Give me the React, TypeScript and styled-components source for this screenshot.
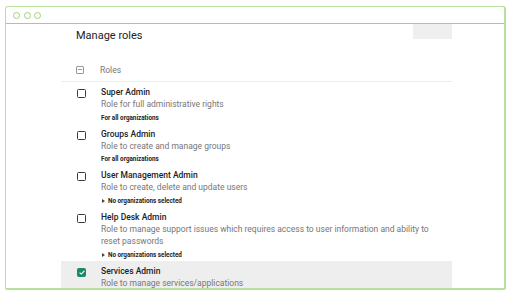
import React from "react";
import styled, { createGlobalStyle } from "styled-components";

const Global = createGlobalStyle`
  html, body { margin: 0; padding: 0; background: #ffffff; }
  body { font-family: Roboto, "Liberation Sans", sans-serif; }
  * { box-sizing: border-box; }
`;

const Frame = styled.div`
  margin: 6px 0 0 5px;
  width: 501px;
  height: 284px;
  border-style: solid;
  border-color: #b9df9d;
  border-width: 1.5px 2.5px 2.5px 1.5px;
  border-radius: 3px 3px 2px 2px;
  overflow: hidden;
  display: flex;
  flex-direction: column;
  background: #fff;
`;

const TitleBar = styled.div`
  height: 17px;
  flex: none;
  border-bottom: 1.5px solid #9fd27b;
  display: flex;
  align-items: center;
  gap: 3.5px;
  padding-left: 7px;
`;

const Dot = styled.span`
  width: 7px;
  height: 7px;
  border-radius: 50%;
  border: 1px solid #9fd27b;
`;

const Body = styled.div`
  flex: 1;
  overflow: hidden;
  padding-left: 55px;
`;

const Column = styled.div`
  width: 391px;
`;

const TopRow = styled.div`
  height: 34px;
  display: flex;
  justify-content: space-between;
  align-items: flex-start;
`;

const Title = styled.h1`
  margin: 0;
  padding: 5px 0 0 15px;
  font-size: 11px;
  line-height: 13px;
  font-weight: 400;
  color: #222;
`;

const GrayTab = styled.div`
  width: 39px;
  height: 15px;
  background: #efefef;
`;

const HeaderRow = styled.div`
  height: 24px;
  display: flex;
  align-items: center;
  padding-left: 15px;
  border-bottom: 1px solid #ededed;
`;

const MinusBox = styled.span`
  width: 8px;
  height: 8px;
  border: 1px solid #9a9a9a;
  border-radius: 1px;
  display: flex;
  align-items: center;
  justify-content: center;
  margin-right: 16px;
  &::after {
    content: "";
    width: 4px;
    height: 1px;
    background: #9a9a9a;
  }
`;

const HeaderLabel = styled.span`
  font-size: 8.5px;
  color: #777;
`;

const Row = styled.div<{ $active?: boolean }>`
  display: flex;
  align-items: flex-start;
  padding: 5px 16px 0 16px;
  background: ${(p) => (p.$active ? "#eeeeee" : "transparent")};
`;

const Check = styled.span<{ $checked?: boolean }>`
  flex: none;
  margin-top: 2px;
  width: 9px;
  height: 9px;
  border-radius: 1.5px;
  border: 1.5px solid ${(p) => (p.$checked ? "#1b8a6c" : "#3a3a3a")};
  background: ${(p) => (p.$checked ? "#1b8a6c" : "transparent")};
  display: flex;
  align-items: center;
  justify-content: center;
  margin-right: 15px;
`;

const Text = styled.div`
  flex: 1;
  min-width: 0;
`;

const RoleName = styled.div`
  font-size: 8.5px;
  line-height: 11px;
  font-weight: 500;
  color: #222;
`;

const RoleDesc = styled.div`
  font-size: 8.5px;
  line-height: 12.5px;
  color: #777;
`;

const Note = styled.div`
  margin-top: 1px;
  font-size: 6.3px;
  line-height: 12px;
  font-weight: 700;
  color: #222;
  display: flex;
  align-items: center;
  gap: 3px;
`;

const Arrow = styled.span`
  width: 0;
  height: 0;
  border-top: 2.5px solid transparent;
  border-bottom: 2.5px solid transparent;
  border-left: 3px solid #444;
  margin-left: 1px;
`;

type Role = {
  name: string;
  desc: string;
  note?: string;
  collapsed?: boolean;
  checked?: boolean;
};

const roles: Role[] = [
  { name: "Super Admin", desc: "Role for full administrative rights", note: "For all organizations" },
  { name: "Groups Admin", desc: "Role to create and manage groups", note: "For all organizations" },
  {
    name: "User Management Admin",
    desc: "Role to create, delete and update users",
    note: "No organizations selected",
    collapsed: true,
  },
  {
    name: "Help Desk Admin",
    desc: "Role to manage support issues which requires access to user information and ability to reset passwords",
    note: "No organizations selected",
    collapsed: true,
  },
  { name: "Services Admin", desc: "Role to manage services/applications", checked: true },
];

export default function App() {
  return (
    <>
      <Global />
      <Frame>
        <TitleBar>
          <Dot />
          <Dot />
          <Dot />
        </TitleBar>
        <Body>
          <Column>
            <TopRow>
              <Title>Manage roles</Title>
              <GrayTab />
            </TopRow>
            <HeaderRow>
              <MinusBox />
              <HeaderLabel>Roles</HeaderLabel>
            </HeaderRow>
            {roles.map((r) => (
              <Row key={r.name} $active={r.checked}>
                <Check $checked={r.checked}>
                  {r.checked && (
                    <svg width="6" height="5" viewBox="0 0 6 5">
                      <path d="M0.6 2.6 L2.3 4.1 L5.4 0.8" fill="none" stroke="#fff" strokeWidth="1.1" />
                    </svg>
                  )}
                </Check>
                <Text>
                  <RoleName>{r.name}</RoleName>
                  <RoleDesc>{r.desc}</RoleDesc>
                  {r.note && (
                    <Note>
                      {r.collapsed && <Arrow />}
                      {r.note}
                    </Note>
                  )}
                </Text>
              </Row>
            ))}
          </Column>
        </Body>
      </Frame>
    </>
  );
}
